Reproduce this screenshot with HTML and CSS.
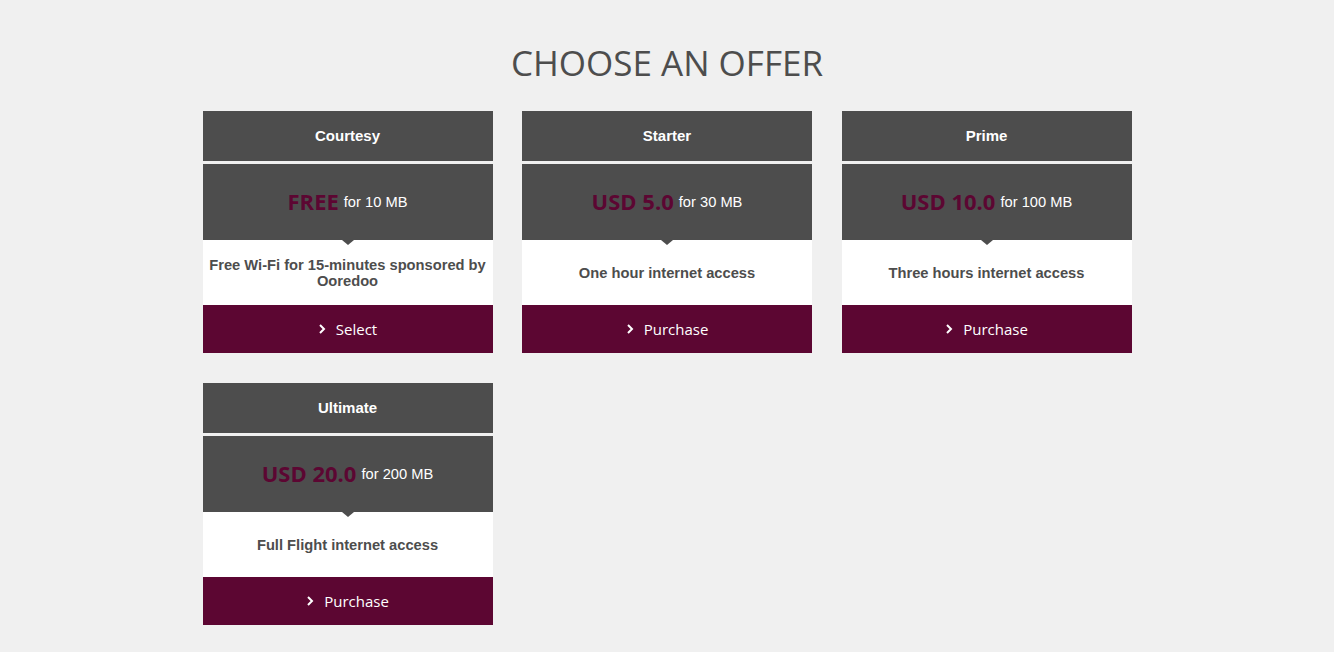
FILE: index.html
```html
<!DOCTYPE html>
<html>
<head>
<meta charset="utf-8">
<link rel="stylesheet" href="styles.css">
</head>
<body>
<main class="page">
  <h1 class="title">CHOOSE AN OFFER</h1>
  <div class="grid">
    <div class="card">
      <div class="card-head">Courtesy</div>
      <div class="card-price"><span class="amount">FREE</span> <span class="volume">for 10 MB</span></div>
      <div class="card-desc">Free Wi-Fi for 15-minutes sponsored by Ooredoo</div>
      <div class="card-btn"><svg class="chev" viewBox="0 0 8 12" width="8" height="12"><path d="M2 2l4 4-4 4" fill="none" stroke="#fff" stroke-width="2"/></svg><span>Select</span></div>
    </div>
    <div class="card">
      <div class="card-head">Starter</div>
      <div class="card-price"><span class="amount">USD 5.0</span> <span class="volume">for 30 MB</span></div>
      <div class="card-desc">One hour internet access</div>
      <div class="card-btn"><svg class="chev" viewBox="0 0 8 12" width="8" height="12"><path d="M2 2l4 4-4 4" fill="none" stroke="#fff" stroke-width="2"/></svg><span>Purchase</span></div>
    </div>
    <div class="card">
      <div class="card-head">Prime</div>
      <div class="card-price"><span class="amount">USD 10.0</span> <span class="volume">for 100 MB</span></div>
      <div class="card-desc">Three hours internet access</div>
      <div class="card-btn"><svg class="chev" viewBox="0 0 8 12" width="8" height="12"><path d="M2 2l4 4-4 4" fill="none" stroke="#fff" stroke-width="2"/></svg><span>Purchase</span></div>
    </div>
    <div class="card">
      <div class="card-head">Ultimate</div>
      <div class="card-price"><span class="amount">USD 20.0</span> <span class="volume">for 200 MB</span></div>
      <div class="card-desc">Full Flight internet access</div>
      <div class="card-btn"><svg class="chev" viewBox="0 0 8 12" width="8" height="12"><path d="M2 2l4 4-4 4" fill="none" stroke="#fff" stroke-width="2"/></svg><span>Purchase</span></div>
    </div>
  </div>
</main>
</body>
</html>
```
FILE: styles.css
```css
html, body {
  margin: 0;
  padding: 0;
  background: #f0f0f0;
}
.page {
  width: 929px;
  margin: 0 auto;
  padding-top: 38px;
}
.title {
  margin: 0 0 23px;
  height: 50px;
  line-height: 50px;
  text-align: center;
  font-family: "Open Sans", sans-serif;
  font-weight: 400;
  font-size: 35px;
  color: #4d4d4d;
}
.grid {
  display: grid;
  grid-template-columns: repeat(3, 290px);
  column-gap: 29.5px;
  row-gap: 30px;
}
.card {
  display: flex;
  flex-direction: column;
}
.card-head {
  height: 50px;
  line-height: 50px;
  background: #4d4d4d;
  color: #fff;
  text-align: center;
  font-family: "Liberation Sans", Arial, sans-serif;
  font-weight: 700;
  font-size: 15px;
}
.card-price {
  position: relative;
  margin-top: 3px;
  height: 76px;
  background: #4d4d4d;
  display: flex;
  align-items: center;
  justify-content: center;
  gap: 5px;
  padding-bottom: 3px;
  box-sizing: border-box;
}
.card-price::after {
  content: "";
  position: absolute;
  left: 50%;
  bottom: -5px;
  margin-left: -6px;
  border-left: 6px solid transparent;
  border-right: 6px solid transparent;
  border-top: 5px solid #4d4d4d;
}
.amount {
  font-family: "Open Sans", sans-serif;
  font-weight: 700;
  font-size: 22px;
  color: #5c0632;
}
.volume {
  font-family: "Liberation Sans", Arial, sans-serif;
  font-size: 14.7px;
  color: #fff;
  padding-top: 3px;
}
.card-desc {
  height: 65px;
  background: #fff;
  display: flex;
  align-items: center;
  justify-content: center;
  text-align: center;
  padding: 0;
  font-family: "Liberation Sans", Arial, sans-serif;
  font-weight: 700;
  font-size: 14.7px;
  line-height: 16px;
  color: #4d4d4d;
}
.card-btn {
  height: 48px;
  background: #5c0632;
  display: flex;
  align-items: center;
  justify-content: center;
  gap: 10px;
  color: #fff;
  font-family: "Open Sans", sans-serif;
  font-size: 15px;
}
.chev {
  display: block;
}
```
